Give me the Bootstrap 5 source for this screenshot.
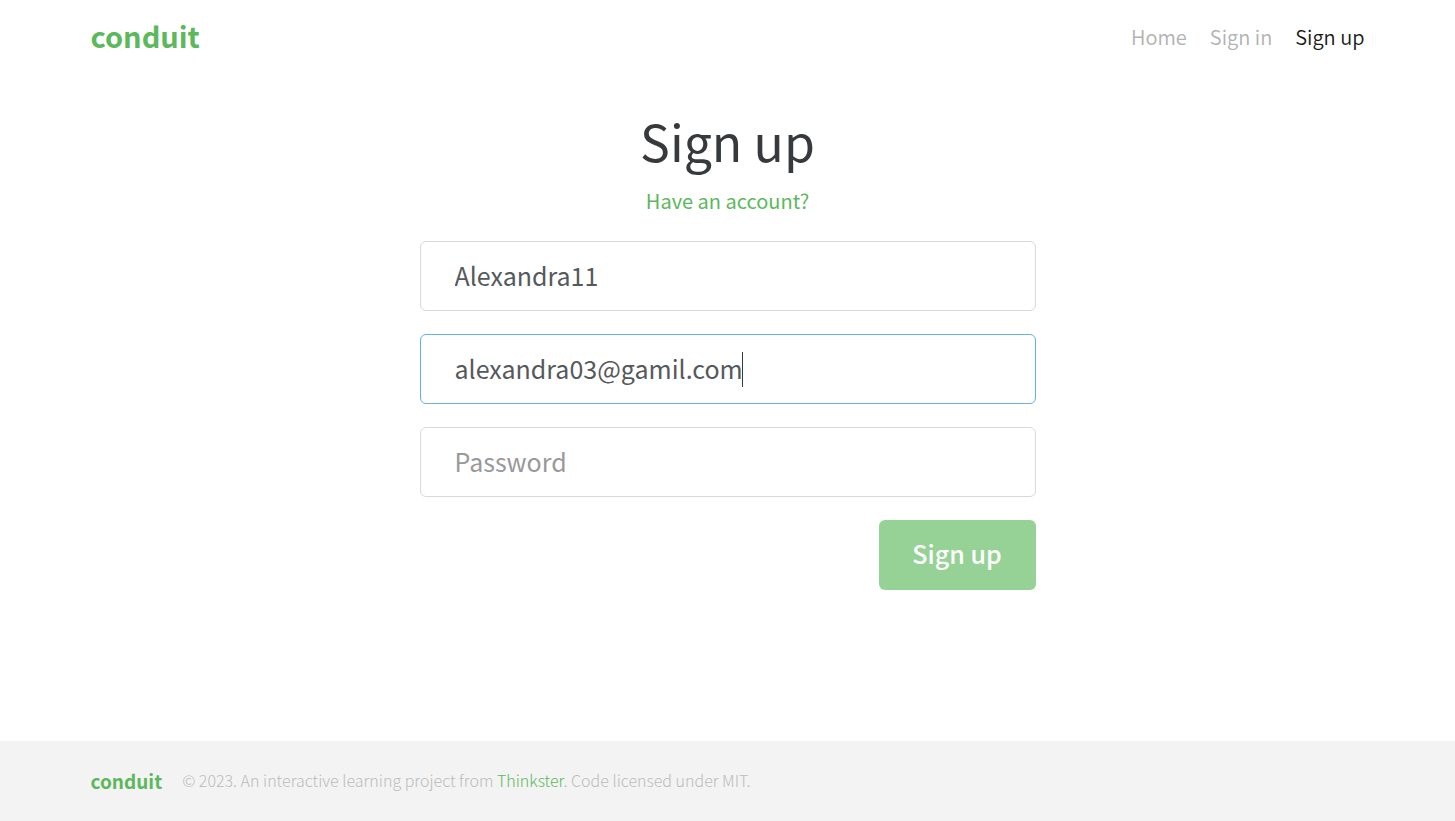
<!DOCTYPE html>
<html lang="en">
<head>
<meta charset="utf-8">
<meta name="viewport" content="width=device-width, initial-scale=1">
<title>Conduit</title>
<link rel="stylesheet" href="https://cdn.jsdelivr.net/npm/bootstrap@5.3.0/dist/css/bootstrap.min.css">
<style>
body { font-family: "Noto Sans CJK SC", "Noto Sans", sans-serif; color: #373a3c; line-height: 1.5; }
.page-wrap { max-width: 1318px; padding: 0 22px; }
.site-bar { height: 74px; }
.brand-link { font-weight: 700; color: #5cb85c; text-decoration: none; font-size: 29px; line-height: 44px; }
.site-bar .brand-link { padding-bottom: 4px; }
.menu-list { gap: 23px; font-size: 20px; font-weight: 350; }
.menu-list a { color: #b2b2b2; text-decoration: none; }
.menu-list a.active { color: #1a1a1a; }
.auth-main { padding-top: 36px; }
.auth-title { font-size: 50px; line-height: 60px; font-weight: 400; margin: 0 0 14px; }
.auth-alt { color: #5cb85c; text-decoration: none; font-size: 20px; line-height: 34px; }
.auth-form { max-width: 616px; gap: 23px; margin-top: 23px; }
.auth-form .form-control { height: 70px; padding: 0 34px 2px; font-size: 25px; color: #55595c; border-color: #d9d9d9; border-radius: 6px; box-shadow: none; }
.auth-form .form-control:focus { border-color: #66afe9; caret-color: transparent; }
.auth-form .form-control::placeholder { color: #999; }
.text-caret { position: absolute; left: 322px; top: 18px; width: 1px; height: 35px; background: #373a3c; }
.btn-submit { height: 70px; width: 157px; padding: 0 0 2px; font-size: 25px; font-weight: 500; background: #96d296; color: #fff; border: 0; border-radius: 6px; }
.site-foot { background: #f3f3f3; height: 80px; }
.site-foot .brand-link { font-size: 19px; line-height: 32px; }
.foot-note { font-size: 16px; font-weight: 300; color: #bbb; margin-left: 20px; padding-bottom: 2px; }
.foot-note a { color: #5cb85c; text-decoration: none; }
</style>
</head>
<body class="d-flex flex-column min-vh-100">
<header class="container-fluid page-wrap"><nav class="site-bar d-flex align-items-center justify-content-between">
<a class="brand-link" href="#">conduit</a>
<ul class="menu-list list-unstyled d-flex mb-0"><li><a href="#">Home</a></li><li><a href="#">Sign in</a></li><li><a class="active" href="#">Sign up</a></li></ul>
</nav></header>
<main class="auth-main container-fluid flex-grow-1 text-center">
<h1 class="auth-title">Sign up</h1>
<a class="auth-alt" href="#">Have an account?</a>
<form class="auth-form d-flex flex-column mx-auto">
<input class="form-control" type="text" aria-label="Username" value="Alexandra11">
<div class="position-relative"><input class="form-control" type="text" aria-label="Email" value="alexandra03@gamil.com" autofocus><span class="text-caret"></span></div>
<input class="form-control" type="password" aria-label="Password" placeholder="Password">
<button class="btn btn-submit align-self-end" type="button">Sign up</button>
</form>
</main>
<footer class="site-foot"><div class="container-fluid page-wrap h-100 d-flex align-items-center"><a class="brand-link" href="#">conduit</a><span class="foot-note">© 2023. An interactive learning project from <a href="#">Thinkster</a>. Code licensed under MIT.</span></div></footer>
<script src="https://cdn.jsdelivr.net/npm/bootstrap@5.3.0/dist/js/bootstrap.bundle.min.js"></script>
</body>
</html>
